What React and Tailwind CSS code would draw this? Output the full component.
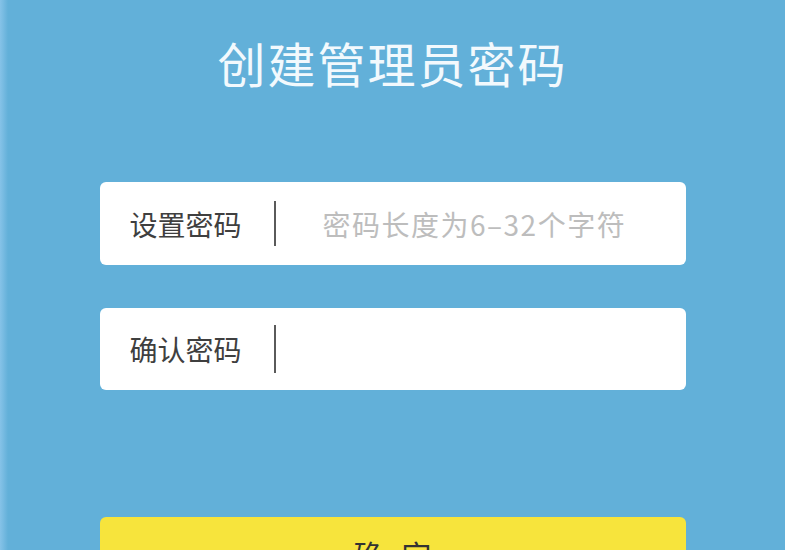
export default function App() {
  return (
    <div
      className="w-[785px] h-[550px] overflow-hidden bg-[#62b0d9] flex flex-col items-center relative"
      style={{ fontFamily: '"Noto Sans CJK SC", "Noto Sans", sans-serif' }}
    >
      {/* left light edge */}
      <div className="absolute left-0 top-0 h-full w-[8px] bg-gradient-to-r from-[#86c3e8] to-[#62b0d9]"></div>

      {/* title */}
      <h1 className="shrink-0 mt-[38px] text-[48px] leading-none text-[#f2f9fd] tracking-[2px] font-normal">
        创建管理员密码
      </h1>

      {/* password */}
      <div className="shrink-0 mt-[96px] w-[586px] h-[83px] bg-white rounded-[6px] flex items-center pl-[30px]">
        <span className="text-[28px] leading-none text-[#3f3f3f] w-[114px]">设置密码</span>
        <div className="ml-[30px] w-[2px] h-[45px] bg-[#5a5a5a]"></div>
        <span className="ml-[47px] text-[28px] leading-none text-[#bdbdbd] tracking-[1.5px]">
          密码长度为6–32个字符
        </span>
      </div>

      {/* confirm */}
      <div className="shrink-0 mt-[43px] w-[586px] h-[82px] bg-white rounded-[6px] flex items-center pl-[30px]">
        <span className="text-[28px] leading-none text-[#3f3f3f] w-[114px]">确认密码</span>
        <div className="ml-[30px] w-[2px] h-[48px] bg-[#5a5a5a]"></div>
      </div>

      {/* button */}
      <div className="shrink-0 mt-[127px] w-[586px] h-[83px] bg-[#f7e43c] rounded-[6px] flex justify-center pt-[22px] pl-[18px]">
        <span className="text-[30px] leading-none text-[#333] tracking-[18px]">确定</span>
      </div>
    </div>
  );
}
